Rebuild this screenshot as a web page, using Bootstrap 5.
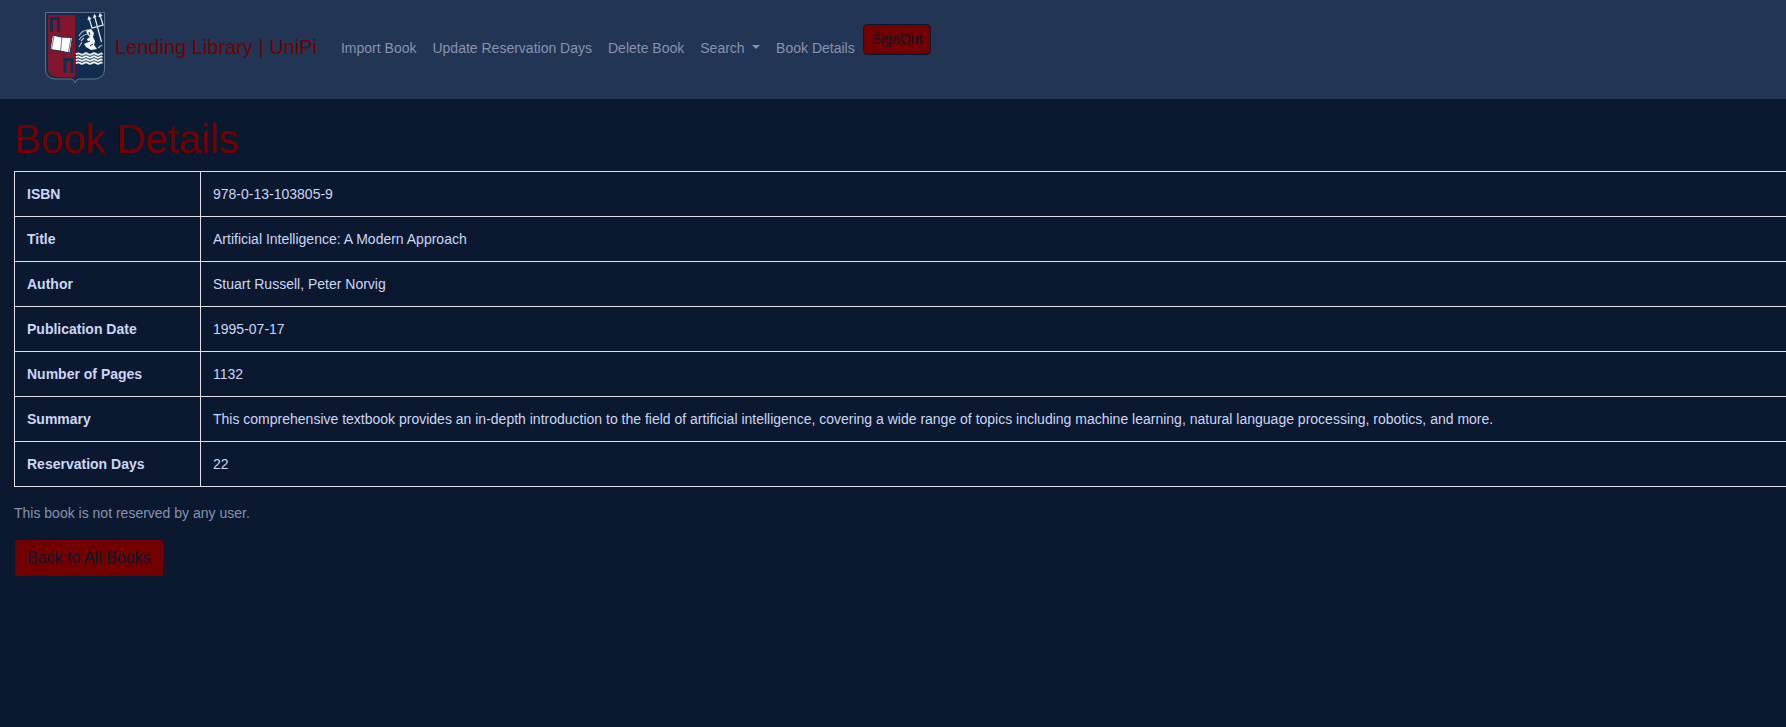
<!DOCTYPE html>
<html lang="en">
<head>
<meta charset="utf-8">
<meta name="viewport" content="width=device-width, initial-scale=1">
<title>Book Details</title>
<link href="https://cdn.jsdelivr.net/npm/bootstrap@5.3.0/dist/css/bootstrap.min.css" rel="stylesheet">
<style>
  body { background: #0a192f; color: #ccd6f6; font: 14px/20px "Liberation Sans", Arial, sans-serif; }
  .topbar { background: #233554; padding: 12px 45px 15px; }
  .crest { width: 60px; height: 72px; }
  .navbar-brand, .navbar-brand:hover { color: #720000; font-size: 20px; line-height: 30px; gap: 10px; }
  .brand-name { padding-bottom: 2px; }
  .topbar .nav-link { color: #8892b0; }
  .topbar .nav-link:hover { color: #ccd6f6; }
  .btn-library { --bs-btn-bg: #720000; --bs-btn-color: #0a192f; --bs-btn-border-color: #0a192f;
    --bs-btn-hover-bg: #8a0000; --bs-btn-hover-color: #0a192f; --bs-btn-border-radius: 4px; }
  .btn-signout { --bs-btn-font-size: 14px; }
  .signout-form { padding-bottom: 18px; }
  .content-area { padding: 16px 0 16px 14px; }
  h1 { color: #720000; font-size: 40px; }
  .table-book { --bs-table-bg: transparent; --bs-table-color: #ccd6f6; color: #ccd6f6; border-color: #dee2e6; }
  .table-book th, .table-book td { padding: 12px; }
  .table-book th { width: 186px; }
  .note { color: #8892b0; }
</style>
</head>
<body>
<nav class="navbar navbar-expand-lg topbar">
  <a class="navbar-brand d-flex align-items-center p-0 me-3" href="#">
    <svg class="crest" viewBox="0 0 60 72" aria-hidden="true">
      <path d="M.5 .5H59.5V58Q59 66 50 67H34Q31 67 30 71Q29 67 26 67H10Q1 66 .5 58Z" fill="#102d50" stroke="#6d8196" stroke-width=".8"/>
      <path d="M3 3H30V65H12Q3 64 3 57Z" fill="#83162d"/>
      <path d="M6.500 20V6.500H13.500V20M20 61V47.500H27V61" fill="none" stroke="#102d50" stroke-width="3"/>
      <path d="M5 6.500H15M18.500 47.500H28.500" stroke="#102d50" stroke-width="3"/>
      <path d="M7.500 23L16 25L27.500 25.500L25 41L15 39L5 37.500Z" fill="#fff" stroke="#102d50" stroke-width="1"/>
      <path d="M17 25L15.500 39M9 24L6.500 37M26 26L23.500 40" stroke="#4c5470" stroke-width=".8"/>
      <path d="M44 6L47 16L58 13L55 3M49.500 4L56.500 30M43 8L44 5L46 7M48.500 6L49.500 3L51 5M54 5L55 2L57 4" fill="none" stroke="#e9eef2" stroke-width="1.200"/>
      <path d="M41 18L46 17L49 21L48 25L50 29L49 33L52 37L46 38L41 35L39 32L43 30L42 27L45 25L42 22Z" fill="#f4f6f7"/>
      <path d="M34 24Q37 18 43 18M34 28Q38 22 44 22M37 30L34 35M39 26L36 29M53 36L57 33" fill="none" stroke="#a8b9c6" stroke-width="1.200"/>
      <path d="M42 30L45 29M45 34L48 32M44 20L45 23" stroke="#102d50" stroke-width="1"/>
      <path id="wave" d="M31 42.500Q33 40.500 35 42T39 42T43 42T47 42T51 42T55 42T57 42.500" fill="none" stroke="#edf3f5" stroke-width="1.800"/>
      <use href="#wave" y="3"/><use href="#wave" y="6"/><use href="#wave" y="9"/>
    </svg>
    <span class="brand-name">Lending Library | UniPi</span>
  </a>
  <button class="navbar-toggler" type="button" data-bs-toggle="collapse" data-bs-target="#mainNav" aria-controls="mainNav" aria-label="Toggle navigation"><span class="navbar-toggler-icon"></span></button>
  <div class="collapse navbar-collapse" id="mainNav">
    <ul class="navbar-nav">
      <li class="nav-item"><a class="nav-link" href="#">Import Book</a></li>
      <li class="nav-item"><a class="nav-link" href="#">Update Reservation Days</a></li>
      <li class="nav-item"><a class="nav-link" href="#">Delete Book</a></li>
      <li class="nav-item dropdown">
        <a class="nav-link dropdown-toggle" href="#" role="button" data-bs-toggle="dropdown" aria-expanded="false">Search </a>
      </li>
      <li class="nav-item"><a class="nav-link" href="#">Book Details</a></li>
    </ul>
    <form class="signout-form" action="#"><button class="btn btn-sm btn-library btn-signout" type="submit">SignOut</button></form>
  </div>
</nav>
<main class="content-area">
  <h1>Book Details</h1>
  <table class="table table-bordered table-book mb-3">
    <tbody>
      <tr><th scope="row">ISBN</th><td class="border-end-0">978-0-13-103805-9</td></tr>
      <tr><th scope="row">Title</th><td class="border-end-0">Artificial Intelligence: A Modern Approach</td></tr>
      <tr><th scope="row">Author</th><td class="border-end-0">Stuart Russell, Peter Norvig</td></tr>
      <tr><th scope="row">Publication Date</th><td class="border-end-0">1995-07-17</td></tr>
      <tr><th scope="row">Number of Pages</th><td class="border-end-0">1132</td></tr>
      <tr><th scope="row">Summary</th><td class="border-end-0">This comprehensive textbook provides an in-depth introduction to the field of artificial intelligence, covering a wide range of topics including machine learning, natural language processing, robotics, and more.</td></tr>
      <tr><th scope="row">Reservation Days</th><td class="border-end-0">22</td></tr>
    </tbody>
  </table>
  <p class="note mb-3">This book is not reserved by any user.</p>
  <a class="btn btn-library" href="#">Back to All Books</a>
</main>
<script src="https://cdn.jsdelivr.net/npm/bootstrap@5.3.0/dist/js/bootstrap.bundle.min.js"></script>
</body>
</html>
